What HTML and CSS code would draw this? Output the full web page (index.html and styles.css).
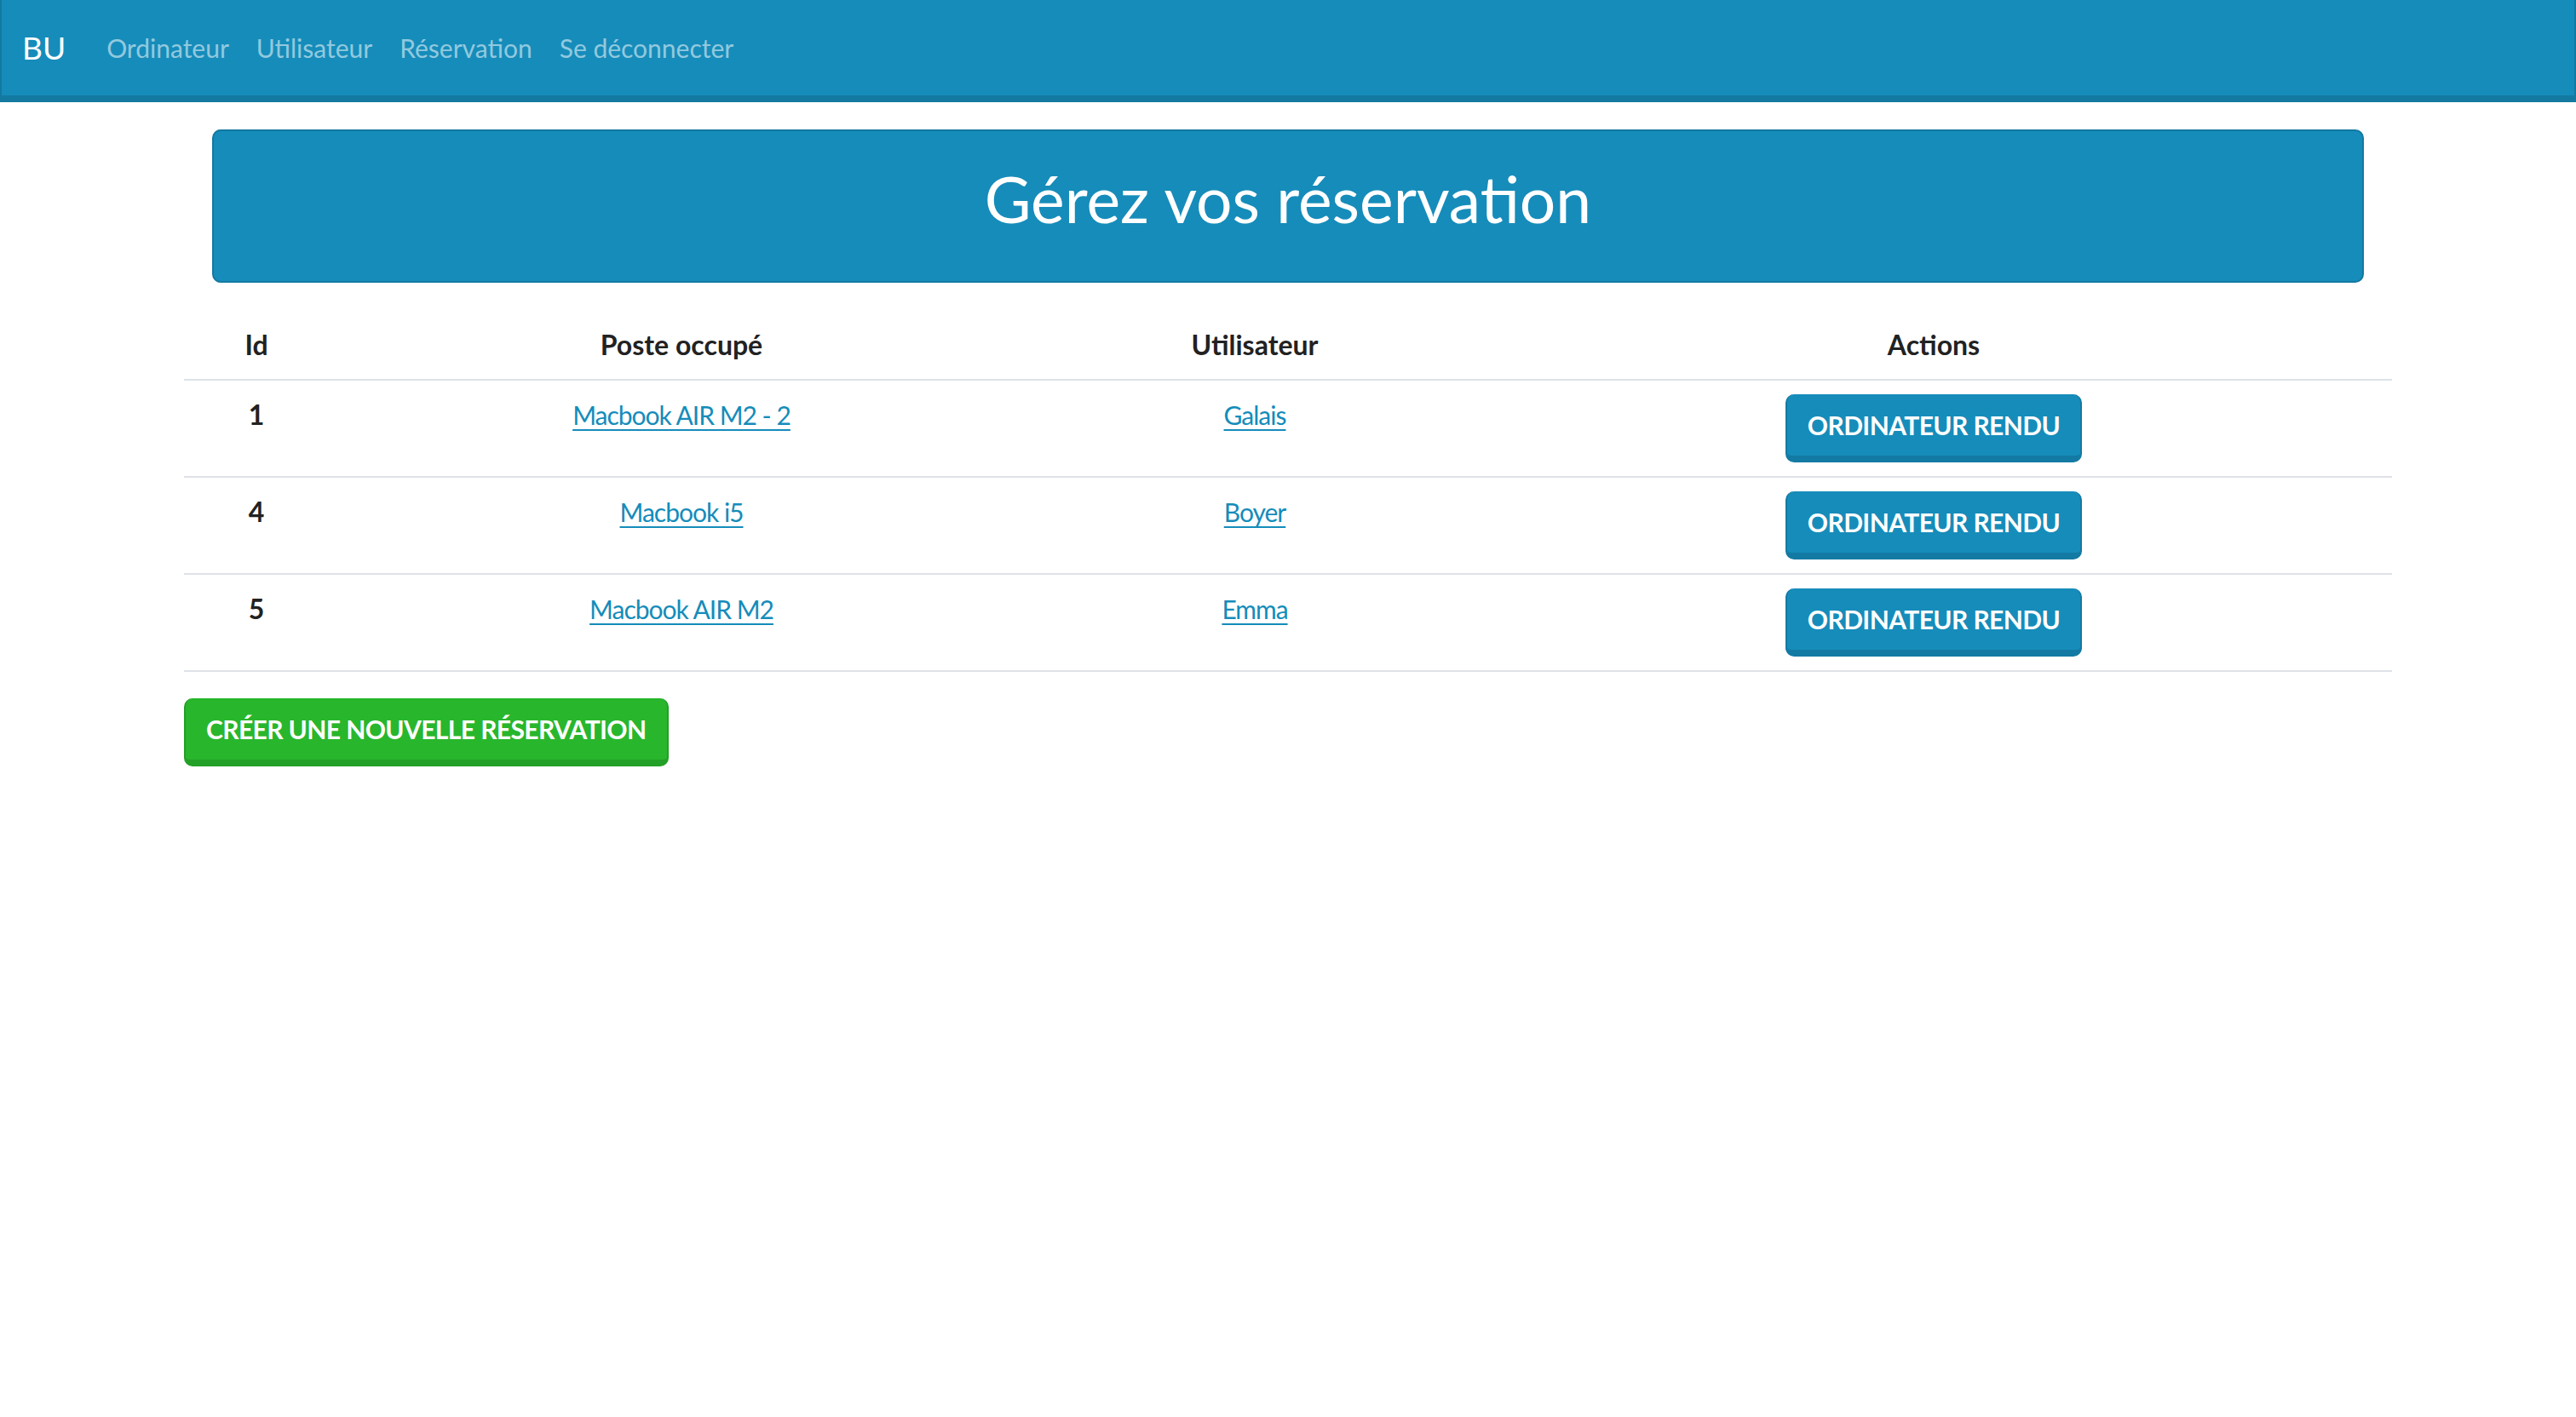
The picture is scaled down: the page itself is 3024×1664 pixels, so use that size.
FILE: index.html
```html
<!DOCTYPE html>
<html lang="fr">
<head>
<meta charset="utf-8">
<title>BU - Réservations</title>
<link rel="stylesheet" href="styles.css">
</head>
<body>
<nav class="navbar">
  <a class="brand" href="#">BU</a>
  <ul class="nav">
    <li><a class="nav-link" href="#">Ordinateur</a></li>
    <li><a class="nav-link" href="#">Utilisateur</a></li>
    <li><a class="nav-link" href="#">Réservation</a></li>
    <li><a class="nav-link" href="#">Se déconnecter</a></li>
  </ul>
</nav>
<main class="container">
  <div class="hero">
    <h1 class="hero-title">Gérez vos réservation</h1>
  </div>
  <table class="table">
    <colgroup>
      <col class="c-id">
      <col class="c-poste">
      <col class="c-user">
      <col class="c-actions">
    </colgroup>
    <thead>
      <tr><th>Id</th><th>Poste occupé</th><th>Utilisateur</th><th>Actions</th></tr>
    </thead>
    <tbody>
      <tr>
        <th>1</th>
        <td><a href="#">Macbook AIR M2 - 2</a></td>
        <td><a href="#">Galais</a></td>
        <td><button class="btn btn-primary">Ordinateur rendu</button></td>
      </tr>
      <tr>
        <th>4</th>
        <td><a href="#">Macbook i5</a></td>
        <td><a href="#">Boyer</a></td>
        <td><button class="btn btn-primary">Ordinateur rendu</button></td>
      </tr>
      <tr>
        <th>5</th>
        <td><a href="#">Macbook AIR M2</a></td>
        <td><a href="#">Emma</a></td>
        <td><button class="btn btn-primary">Ordinateur rendu</button></td>
      </tr>
    </tbody>
  </table>
  <a class="btn btn-success" href="#">Créer une nouvelle réservation</a>
</main>
</body>
</html>
```
FILE: styles.css
```css
* { box-sizing: border-box; }

body {
  margin: 0;
  font-family: Lato, "Open Sans", "Liberation Sans", sans-serif;
  font-size: 32px;
  line-height: 1.5;
  color: #222;
  background: #fff;
}

.navbar {
  display: flex;
  align-items: center;
  height: 120px;
  padding: 0 24px;
  background: #168cba;
  border-style: solid;
  border-color: #1379a1;
  border-width: 0 2px 8px 2px;
}

.brand {
  color: #fff;
  text-decoration: none;
  font-size: 37px;
  line-height: 1.5;
  margin-right: 32px;
}

.nav {
  display: flex;
  list-style: none;
  margin: 0;
  padding: 0;
}

.nav-link {
  display: block;
  padding: 16px;
  color: rgba(255, 255, 255, 0.55);
  text-decoration: none;
  font-size: 30px;
}

.container {
  width: 2640px;
  margin: 0 auto;
  padding: 32px 24px 0;
}

.hero {
  margin: 0 33px 33px;
  height: 180px;
  background: #168cba;
  border: 2px solid #1379a1;
  border-radius: 10px;
  display: flex;
  align-items: center;
  justify-content: center;
}

.hero-title {
  margin: 0 0 18px;
  color: #fff;
  font-size: 75px;
  font-weight: 400;
  line-height: 1.2;
}

.table {
  width: 100%;
  border-collapse: collapse;
  margin-bottom: 31px;
}

.c-id { width: 170px; }
.c-poste { width: 828px; }
.c-user { width: 518px; }
.c-actions { width: 1076px; }

.table th,
.table td {
  padding: 16px;
  text-align: center;
  vertical-align: top;
  font-size: 32px;
  line-height: 48px;
}

.table th { font-weight: 700; }

.table thead th {
  vertical-align: bottom;
  border-bottom: 2px solid #dee2e6;
}

.table tbody tr { border-bottom: 2px solid #dee2e6; }

.table a {
  color: #158cba;
  font-size: 30px;
  letter-spacing: -1px;
  text-decoration: underline;
  text-underline-offset: 5px;
  text-decoration-thickness: 2px;
}

.btn {
  display: inline-block;
  font-family: inherit;
  font-size: 30px;
  font-weight: 700;
  line-height: 48px;
  text-transform: uppercase;
  text-decoration: none;
  color: #fff;
  padding: 12px 24px;
  border-style: solid;
  border-width: 0 2px 8px 2px;
  border-radius: 10px;
  cursor: pointer;
  letter-spacing: -0.6px;
}

.btn-primary {
  background: #168cba;
  border-color: #137aa3;
}

.btn-success {
  background: #28b62c;
  border-color: #23a027;
}
```
